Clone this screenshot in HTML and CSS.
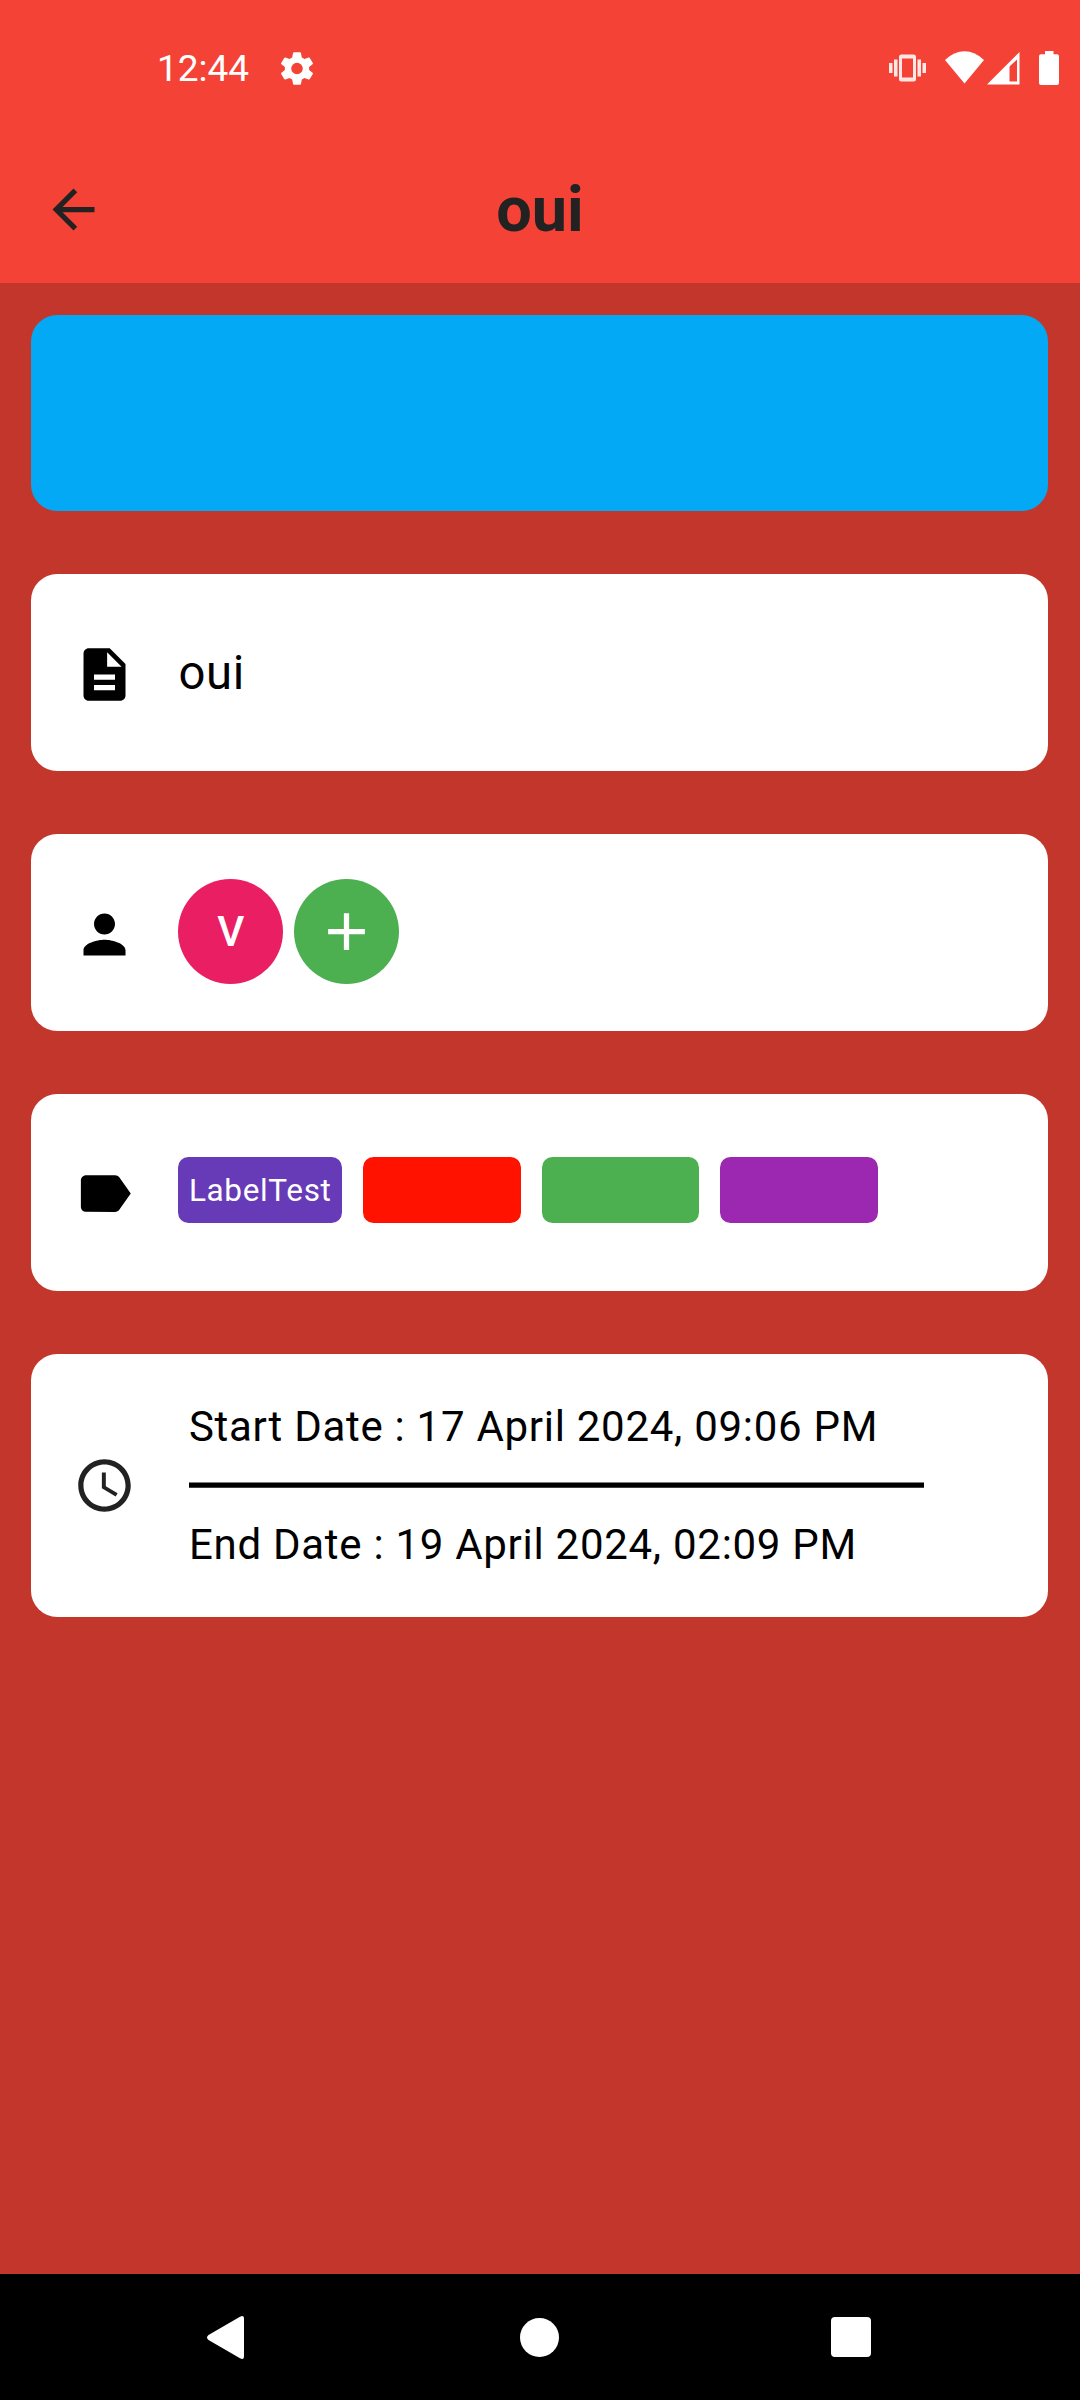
FILE: index.html
```html
<!DOCTYPE html>
<html lang="en">
<head>
<meta charset="utf-8">
<title>oui</title>
<link rel="stylesheet" href="styles.css">
</head>
<body>
<div class="screen">
  <header class="top">
    <div class="status">
      <span class="clock">12:44</span>
      <svg class="gear" viewBox="0 0 32 33"><path fill-rule="evenodd" d="M12 1.2Q12.200 .3 13 .3h6q.8 0 1 .9l.8 4.300 2.700 1.600 4.100-1.600q.8-.3 1.200.4l3 5.200q.4.700-.3 1.200L28.100 15v3l3.400 2.700q.7.500.3 1.200l-3 5.200q-.4.700-1.200.4l-4.100-1.600-2.700 1.600-.8 4.300q-.2.900-1 .9h-6q-.8 0-1-.9l-.8-4.300-2.700-1.600-4.100 1.600q-.8.300-1.200-.4l-3-5.200q-.4-.7.300-1.200L3.900 18v-3L.5 12.300q-.7-.5-.3-1.200l3-5.200q.4-.7 1.200-.4l4.100 1.600 2.700-1.600zM16 10.700a5.800 5.800 0 1 0 0 11.600 5.800 5.800 0 0 0 0-11.600z"/></svg>
      <div class="signals">
        <svg class="vibrate" viewBox="0 0 37 28"><path d="M0 9h3.500v10H0zM5 5.500h3.500v17H5zM28.500 5.500H32v17h-3.500zM33.500 9H37v10h-3.500z"/><path fill-rule="evenodd" d="M12.500.5h12q2.500 0 2.500 2.500v22q0 2.500-2.500 2.500h-12Q10 27.500 10 25V3q0-2.500 2.500-2.500zM13 4.500v19h11v-19z"/></svg>
        <svg class="wifi" viewBox="0 0 39 33"><path d="M0 9Q9 .3 19.500.3T39 9L19.500 32.500z"/></svg>
        <svg class="cell" viewBox="0 0 33 33"><path fill-rule="evenodd" d="M0 32.500L32.500 0v32.500zM22.500 14.500v15H30V7.500z"/></svg>
        <svg class="battery" viewBox="0 0 20 34"><path d="M6 0h8.500v3.300H18q2 0 2 2V32q0 2-2 2H2q-2 0-2-2V5.300q0-2 2-2h4z"/></svg>
      </div>
    </div>
    <div class="appbar">
      <svg class="icon back" viewBox="0 0 24 24"><path d="M20 11H7.830l5.590-5.590L12 4l-8 8 8 8 1.410-1.410L7.830 13H20v-2z"/></svg>
      <h1>oui</h1>
    </div>
  </header>

  <main class="content">
    <section class="card cover"></section>

    <section class="card">
      <svg class="icon low" viewBox="0 0 24 24"><path d="M14 2H6c-1.100 0-1.990.9-1.990 2L4 20c0 1.100.89 2 1.990 2H18c1.100 0 2-.9 2-2V8l-6-6zm2 16H8v-2h8v2zm0-4H8v-2h8v2zm-3-5V3.500L18.500 9H13z"/></svg>
      <span class="description">oui</span>
    </section>

    <section class="card">
      <svg class="icon low" viewBox="0 0 24 24"><path d="M12 12c2.210 0 4-1.790 4-4s-1.790-4-4-4-4 1.790-4 4 1.790 4 4 4zm0 2c-2.670 0-8 1.340-8 4v2h16v-2c0-2.660-5.330-4-8-4z"/></svg>
      <div class="members">
        <div class="avatar">V</div>
        <div class="avatar add"><svg class="icon" viewBox="0 0 24 24"><path d="M19 13h-6v6h-2v-6H5v-2h6V5h2v6h6v2z"/></svg></div>
      </div>
    </section>

    <section class="card">
      <svg class="icon tag" viewBox="0 0 24 24"><path d="M17.630 5.840C17.270 5.330 16.670 5 16 5L5 5.010C3.900 5.010 3 5.900 3 7v10c0 1.100.9 1.990 2 1.990L16 19c.67 0 1.270-.33 1.630-.84L22 12l-4.370-6.160z"/></svg>
      <div class="labels">
        <span class="label violet">LabelTest</span>
        <span class="label red"></span>
        <span class="label green"></span>
        <span class="label purple"></span>
      </div>
    </section>

    <section class="card schedule">
      <svg class="icon dim" viewBox="0 0 24 24"><path d="M11.990 2C6.470 2 2 6.480 2 12s4.470 10 9.990 10C17.520 22 22 17.520 22 12S17.520 2 11.990 2zM12 20c-4.420 0-8-3.580-8-8s3.580-8 8-8 8 3.580 8 8-3.580 8-8 8zm.5-13H11v6l5.250 3.150.75-1.230-4.500-2.670z"/></svg>
      <div class="dates">
        <span>Start Date : 17 April 2024, 09:06 PM</span>
        <svg class="rule" viewBox="0 0 735 6"><path d="M0 .4h735v5.300H0z"/></svg>
        <span>End Date : 19 April 2024, 02:09 PM</span>
      </div>
    </section>
  </main>

  <nav class="navbar">
    <svg class="nav-back" viewBox="0 0 37 43"><path d="M33 .8Q37-1.500 37 3v37q0 4.500-4 2.200L1.500 24q-3-2.500 0-5z"/></svg>
    <span class="nav-home"></span>
    <span class="nav-recent"></span>
  </nav>
</div>
</body>
</html>
```

FILE: styles.css
```css
* { box-sizing: border-box; }
body { margin: 0; font-family: Roboto, sans-serif; }
svg { display: block; flex: none; }
.screen {
  width: 1080px;
  height: 2400px;
  display: flex;
  flex-direction: column;
  background: #c3362b;
  overflow: hidden;
}
.top { height: 283px; background: #f44336; flex: none; }
.status {
  height: 136px;
  padding: 0 21px 0 157px;
  display: flex;
  align-items: center;
  color: #fff;
  fill: #fff;
}
.clock { width: 124px; font-size: 37px; line-height: 44px; padding-top: 1px; }
.gear { width: 32px; height: 33px; }
.signals { display: flex; align-items: center; margin-left: auto; }
.vibrate { width: 37px; height: 28px; opacity: .88; margin-right: 19px; }
.wifi { width: 39px; height: 33px; margin: -1px 3px 0 0; }
.cell { width: 33px; height: 33px; margin-right: 19px; }
.battery { width: 20px; height: 34px; }

.appbar {
  height: 147px;
  display: grid;
  grid-template-columns: 147px 1fr 147px;
  align-items: center;
  justify-items: center;
}
h1 { margin: 0; font-size: 63px; line-height: 74px; font-weight: 700; color: #222; }
.icon { width: 63px; height: 63px; fill: #000; }
.icon.back, .icon.dim { fill: #222; }

.content {
  flex: 1;
  padding: 31.500px 31.600px 31.500px 31.400px;
  display: flex;
  flex-direction: column;
  gap: 63px;
}
.card {
  height: 196.875px;
  flex: none;
  border-radius: 26.250px;
  background: #fff;
  padding-left: 42px;
  display: flex;
  align-items: center;
  gap: 42px;
}
.card.cover { background: #03a9f4; }
.icon.low { margin-top: 3px; }
.icon.tag { margin-top: 1px; }
.description { font-size: 47.250px; line-height: 56px; letter-spacing: .66px; }

.members { display: flex; gap: 10.500px; margin-top: -2px; }
.avatar {
  width: 105px;
  height: 105px;
  border-radius: 50%;
  background: #e91e63;
  color: #fff;
  font-size: 42px;
  font-weight: 500;
  display: flex;
  align-items: center;
  justify-content: center;
}
.avatar.add { background: #4caf50; }
.avatar .icon { fill: #fff; }

.labels { display: flex; gap: 21px; margin-top: -5px; }
.label {
  min-width: 157.500px;
  height: 65.600px;
  padding: 0 10.500px;
  border-radius: 10.500px;
  color: #fff;
  font-size: 31.500px;
  line-height: 68px;
  letter-spacing: .66px;
}
.violet { background: #673ab7; }
.red { background: #ff1200; }
.green { background: #4caf50; }
.purple { background: #9c27b0; }

.card.schedule { height: 262.500px; gap: 52.500px; }
.dates {
  display: flex;
  flex-direction: column;
  gap: 31px;
  font-size: 42px;
  line-height: 50px;
  letter-spacing: .72px;
  white-space: nowrap;
}
.dates span { padding-top: 1px; margin-bottom: -1px; }
.rule { width: 735px; height: 6px; }

.navbar {
  height: 126px;
  flex: none;
  background: #000;
  padding: 0 209px 0 207px;
  display: flex;
  align-items: center;
  justify-content: space-between;
}
.nav-back { width: 37px; height: 43px; fill: #fff; }
.nav-home { width: 39px; height: 39px; margin-left: 4px; border-radius: 50%; background: #fff; }
.nav-recent { width: 40px; height: 40px; border-radius: 4px; background: #fff; }
```
